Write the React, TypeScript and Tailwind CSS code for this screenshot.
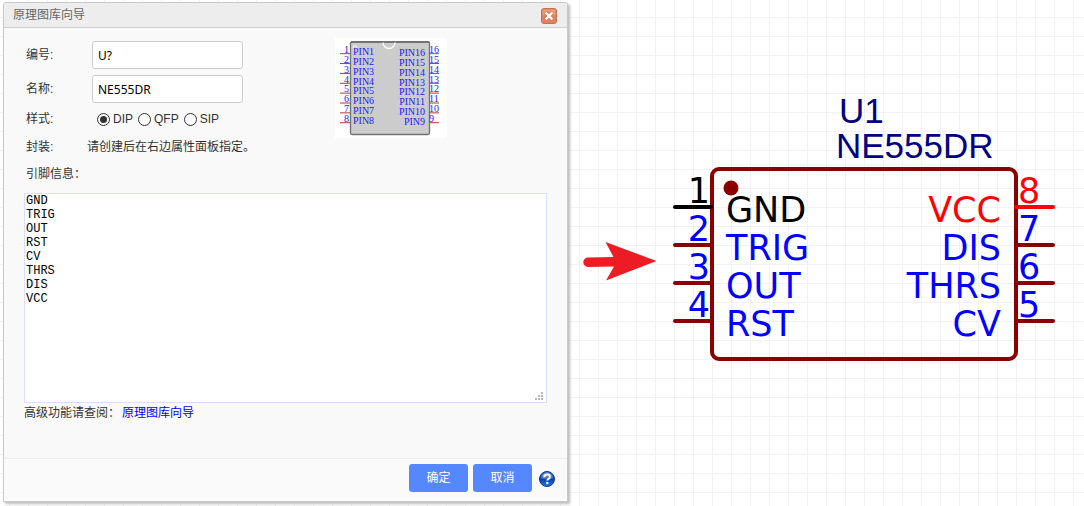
import React, { useState } from "react";

const GRID =
  "bg-white bg-[linear-gradient(to_right,#f2f2f2_1px,transparent_1px),linear-gradient(to_bottom,#f2f2f2_1px,transparent_1px)] bg-[length:19px_19px] bg-[position:9px_17px]";

const SANS = "font-['Liberation_Sans','Noto_Sans_CJK_SC',sans-serif]";

function ChipPreview() {
  const rows = [0, 1, 2, 3, 4, 5, 6, 7];
  return (
    <svg width="112" height="100" viewBox="0 0 112 100" className="block bg-white" role="img" aria-label="DIP">
      {rows.map((i) => (
        <g key={i} stroke="#b03a3a" strokeWidth="1">
          <path d={`M5 ${15.7 + i * 9.86}H15`} />
          <path d={`M95 ${15.7 + i * 9.86}H104`} />
        </g>
      ))}
      <rect x="15.5" y="3.8" width="79" height="92.7" rx="1.5" fill="#cccccc" stroke="#707070" strokeWidth="1.3" />
      <path d="M16 4H94.5" stroke="#505050" strokeWidth="1.2" />
      <path d="M48 4.5a6 6 0 0 0 12 0" fill="none" stroke="#ffffff" strokeWidth="1.3" />
      <circle cx="20" cy="9.5" r="1.8" fill="none" stroke="#ffffff" strokeWidth="0.9" />
      <g fill="#1a1aff" fontSize="10" fontFamily="'Liberation Serif', serif">
        {rows.map((i) => (
          <React.Fragment key={i}>
            <text x="14" y={15 + i * 9.86} textAnchor="end">{i + 1}</text>
            <text x="18" y={17 + i * 9.86}>{`PIN${i + 1}`}</text>
            <text x="90" y={18 + i * 9.86} textAnchor="end">{`PIN${16 - i}`}</text>
            <text x="94" y={15 + i * 9.86}>{16 - i}</text>
          </React.Fragment>
        ))}
      </g>
    </svg>
  );
}

function HelpIcon() {
  return (
    <svg width="16" height="16" viewBox="0 0 16 16" aria-hidden="true">
      <defs>
        <linearGradient id="ball" x1="0" y1="0" x2="0" y2="1">
          <stop offset="0" stopColor="#3f6fc4" />
          <stop offset="0.5" stopColor="#0a3fae" />
          <stop offset="1" stopColor="#1c7de8" />
        </linearGradient>
      </defs>
      <circle cx="8" cy="8" r="7.5" fill="url(#ball)" stroke="#0c3589" strokeWidth="1" />
      <path d="M2 7.2C2.3 3.8 5 1.6 8 1.6s5.7 2.2 6 5.6C10.5 8.7 5.5 8.7 2 7.2Z" fill="#ffffff" opacity="0.25" />
      <path d="M5.3 6.2C5.3 4.4 6.5 3.6 8.1 3.6s2.800.8 2.800 2.300c0 1.800-2.500 1.900-2.500 3.700" fill="none" stroke="#ffffff" strokeWidth="2" />
      <circle cx="8.3" cy="12" r="1.200" fill="#ffffff" />
    </svg>
  );
}

function CloseIcon() {
  return (
    <svg width="16" height="16" viewBox="0 0 16 16" aria-hidden="true">
      <rect x="0.5" y="0.5" width="15" height="15" rx="2.5" fill="#e5825c" stroke="#bd7358" />
      <rect x="1.5" y="1.5" width="13" height="6" rx="1.5" fill="#ee9877" />
      <path d="M4.7 4.7L11.3 11.3M11.3 4.7L4.7 11.3" stroke="#bd6848" strokeWidth="4" />
      <path d="M4.7 4.7L11.3 11.3M11.3 4.7L4.7 11.3" stroke="#ffffff" strokeWidth="2.5" />
    </svg>
  );
}

const LEFT = [
  { n: 1, name: "GND", text: "#000000", line: "#000000" },
  { n: 2, name: "TRIG", text: "#0000ff", line: "#880000" },
  { n: 3, name: "OUT", text: "#0000ff", line: "#880000" },
  { n: 4, name: "RST", text: "#0000ff", line: "#880000" },
];
const RIGHT = [
  { n: 8, name: "VCC", text: "#ff0000", line: "#ff0000" },
  { n: 7, name: "DIS", text: "#0000ff", line: "#880000" },
  { n: 6, name: "THRS", text: "#0000ff", line: "#880000" },
  { n: 5, name: "CV", text: "#0000ff", line: "#880000" },
];

function Schematic() {
  return (
    <svg width="385" height="280" viewBox="0 -12 385 280" className="block shrink-0" role="img" aria-label="NE555DR">
      <g fill="#000080" fontSize="35" fontFamily="'Liberation Sans', sans-serif">
        <text x="167" y="29">U1</text>
        <text x="164" y="64">NE555DR</text>
      </g>
      <g strokeWidth="4" strokeLinecap="round">
        {LEFT.map((p, i) => (
          <path key={p.n} d={`M3 ${113 + i * 38}H39`} stroke={p.line} />
        ))}
        {RIGHT.map((p, i) => (
          <path key={p.n} d={`M345 ${113 + i * 38}H381`} stroke={p.line} />
        ))}
      </g>
      <rect x="40" y="75" width="304" height="190" rx="7" fill="none" stroke="#880000" strokeWidth="4" />
      <path d="M36 113H39" stroke="#000000" strokeWidth="4" strokeLinecap="round" />
      <path d="M344 113H350" stroke="#ff0000" strokeWidth="4" strokeLinecap="round" />
      <circle cx="59" cy="94" r="7.5" fill="#880000" />
      <g fontSize="35" fontFamily="'DejaVu Sans', sans-serif">
        {LEFT.map((p, i) => (
          <g key={p.n} fill={p.text}>
            <text x="38" y={109 + i * 38} textAnchor="end">{p.n}</text>
            <text x="54" y={128 + i * 38}>{p.name}</text>
          </g>
        ))}
        {RIGHT.map((p, i) => (
          <g key={p.n} fill={p.text}>
            <text x="346" y={109 + i * 38}>{p.n}</text>
            <text x="329" y={128 + i * 38} textAnchor="end">{p.name}</text>
          </g>
        ))}
      </g>
    </svg>
  );
}

const FIELD =
  "h-7 w-[151px] rounded-[3px] border border-[#cccccc] bg-white px-[5px] font-['Noto_Sans',sans-serif] text-[12px] text-black outline-none";

export default function App() {
  const [style, setStyle] = useState("DIP");
  return (
    <main className={`flex min-h-screen items-start text-[12px] leading-4 text-[#333333] ${GRID} ${SANS}`}>
      <section
        aria-labelledby="wizard-title"
        className="ml-[3px] mt-[2px] flex min-h-[500px] w-[565px] shrink-0 flex-col rounded-t-[3px] border border-[#c8c8c8] bg-[#f9f9f9] shadow-[2px_2px_3px_#bbbbbb]"
      >
        <header className="flex h-[25px] items-center justify-between rounded-t-[2px] border-b border-[#d0d0d0] bg-[#ededed] pl-[9px] pr-[10px]">
          <h1 id="wizard-title" className="text-[#666666]">原理图库向导</h1>
          <button type="button" aria-label="关闭" className="mt-[2px]">
            <CloseIcon />
          </button>
        </header>

        <form className="flex grow flex-col" onSubmit={(e) => e.preventDefault()}>
          <div className="flex grow flex-col px-5 pt-[10px]">
            <div className="flex">
              <div className="flex w-[311px] flex-col pl-[2px] pt-[3px]">
                <div className="mb-[6px] flex items-center">
                  <label htmlFor="prefix" className="w-[66px]">编号:</label>
                  <input id="prefix" defaultValue="U?" className={FIELD} />
                </div>
                <div className="mb-2 flex items-center">
                  <label htmlFor="name" className="w-[66px]">名称:</label>
                  <input id="name" defaultValue="NE555DR" className={FIELD} />
                </div>
                <fieldset className="mb-2 flex h-5 items-center">
                  <legend className="float-left w-[71px]">样式:</legend>
                  <div className="flex items-center gap-[5px]">
                    {["DIP", "QFP", "SIP"].map((s) => (
                      <label key={s} className="flex items-center gap-[3px]">
                        <input
                          type="radio"
                          name="style"
                          value={s}
                          checked={style === s}
                          onChange={() => setStyle(s)}
                          className="size-[13px] appearance-none rounded-full border border-[#333333] bg-white bg-clip-content p-[2px] checked:bg-[#333333]"
                        />
                        {s}
                      </label>
                    ))}
                  </div>
                </fieldset>
                <dl className="mb-[11px] flex">
                  <dt className="w-[61px]">封装:</dt>
                  <dd>请创建后在右边属性面板指定。</dd>
                </dl>
                <label htmlFor="pins" className="mb-[11px]">引脚信息：</label>
              </div>
              <div>
                <ChipPreview />
              </div>
            </div>
            <div className="relative w-[523px]">
              <textarea
                id="pins"
                spellCheck={false}
                defaultValue={"GND\nTRIG\nOUT\nRST\nCV\nTHRS\nDIS\nVCC"}
                className="block h-[210px] w-full resize-none border border-[#ddddff] bg-white px-px font-['Liberation_Mono',monospace] text-[12px] leading-[14px] text-black outline-none"
              />
              <svg width="8" height="8" viewBox="0 0 8 8" className="pointer-events-none absolute bottom-[3px] right-1" fill="#b8b8b8" aria-hidden="true">
                <path d="M6 0h2v2H6zM3 3h2v2H3zM6 3h2v2H6zM0 6h2v2H0zM3 6h2v2H3zM6 6h2v2H6z" />
              </svg>
            </div>
            <p className="mt-[2px]">
              高级功能请查阅：
              <a href="#guide" className="ml-[2px] text-[#0000ff]">原理图库向导</a>
            </p>
          </div>

          <footer className="flex h-[43px] items-start justify-end gap-[5px] border-t border-[#eeeeee] bg-[#fafafa] pr-3 pt-[5px]">
            <button type="submit" className="h-7 w-[59px] rounded-[3px] bg-[#5588ff] text-white">确定</button>
            <button type="button" className="h-7 w-[59px] rounded-[3px] bg-[#5588ff] text-white">取消</button>
            <a href="#help" aria-label="帮助" className="ml-[2px] mt-[7px]">
              <HelpIcon />
            </a>
          </footer>
        </form>
      </section>

      <section className="flex grow items-start pl-[15px] pt-[82px]">
        <svg width="74" height="40" viewBox="0 0 74 40" className="mr-[15px] mt-[159px] block shrink-0" aria-hidden="true">
          <path d="M22.5 1L73.5 20L23 39.5L31 25.5L5 26A4.700 4.700 0 0 1 5 16.500L30.500 16Z" fill="#ed1c24" />
        </svg>
        <Schematic />
      </section>
    </main>
  );
}
